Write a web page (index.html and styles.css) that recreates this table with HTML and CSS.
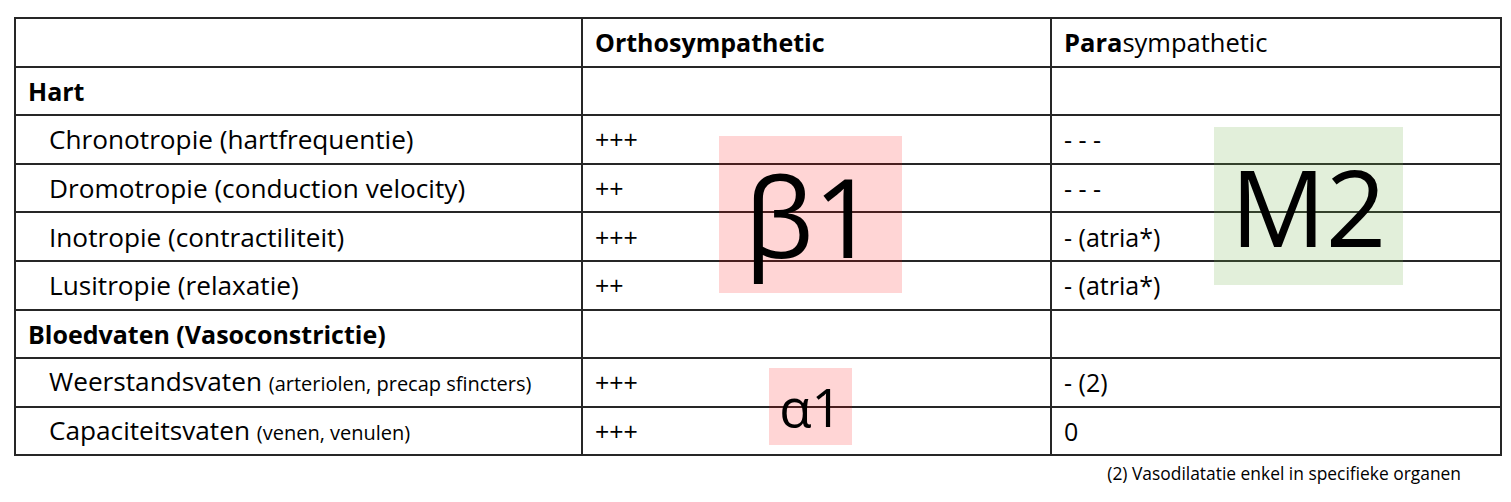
FILE: index.html
```html
<!DOCTYPE html>
<html>
<head>
<meta charset="utf-8">
<link rel="stylesheet" href="styles.css">
</head>
<body>
<div class="slide">
  <table class="grid">
    <colgroup>
      <col class="c1"><col class="c2"><col class="c3">
    </colgroup>
    <tr><td></td><td><b>Orthosympathetic</b></td><td class="head"><b>Para</b>sympathetic</td></tr>
    <tr><td class="group">Hart</td><td></td><td></td></tr>
    <tr><td class="sub">Chronotropie (hartfrequentie)</td><td>+++</td><td>- - -</td></tr>
    <tr><td class="sub">Dromotropie (conduction velocity)</td><td>++</td><td>- - -</td></tr>
    <tr><td class="sub">Inotropie (contractiliteit)</td><td>+++</td><td>- (atria*)</td></tr>
    <tr><td class="sub">Lusitropie (relaxatie)</td><td>++</td><td>- (atria*)</td></tr>
    <tr><td class="group">Bloedvaten (Vasoconstrictie)</td><td></td><td></td></tr>
    <tr><td class="sub">Weerstandsvaten <span class="small">(arteriolen, precap sfincters)</span></td><td>+++</td><td>- (2)</td></tr>
    <tr><td class="sub">Capaciteitsvaten <span class="small">(venen, venulen)</span></td><td>+++</td><td>0</td></tr>
  </table>
  <p class="note">(2) Vasodilatatie enkel in specifieke organen</p>
  <div class="tag tag-b1">β1</div>
  <div class="tag tag-m2">M2</div>
  <div class="tag tag-a1">α1</div>
</div>
</body>
</html>
```
FILE: styles.css
```css
html, body {
  margin: 0;
  padding: 0;
  background: #fff;
}
body {
  font-family: "Open Sans", "Noto Sans", sans-serif;
  color: #000;
}
.slide {
  position: relative;
  width: 1511px;
  height: 502px;
  padding: 17px 0 0 14px;
  box-sizing: border-box;
}
.grid {
  border-collapse: collapse;
  table-layout: fixed;
  width: 1486px;
}
.c1 { width: 567px; }
.c2 { width: 469px; }
.c3 { width: 450px; }
.grid td {
  border: 2px solid #262626;
  height: 48.6px;
  padding: 0 0 0 12px;
  box-sizing: border-box;
  font-size: 25px;
  line-height: 30px;
  white-space: nowrap;
  vertical-align: middle;
}
.grid td.head {
  font-size: 25.5px;
}
.grid td b,
.grid td.group {
  font-weight: 700;
}
.grid td.sub {
  padding-left: 33px;
  font-size: 26.2px;
}
.small {
  font-size: 20px;
}
.note {
  margin: 6px 0 0 0;
  padding-right: 39px;
  text-align: right;
  font-size: 17.4px;
  line-height: 22px;
  width: 1486px;
  box-sizing: border-box;
}
.tag {
  position: absolute;
  display: flex;
  align-items: center;
  justify-content: center;
  line-height: 1;
  color: #000;
}
.tag-b1 {
  left: 719px;
  top: 136px;
  width: 183px;
  height: 157px;
  background: rgba(255, 0, 0, 0.165);
  font-size: 110px;
}
.tag-m2 {
  left: 1214px;
  top: 127px;
  width: 189px;
  height: 158px;
  background: rgba(112, 173, 71, 0.2);
  font-size: 106px;
}
.tag-a1 {
  left: 769px;
  top: 368px;
  width: 83px;
  height: 77px;
  background: rgba(255, 0, 0, 0.165);
  font-size: 53px;
}
```
